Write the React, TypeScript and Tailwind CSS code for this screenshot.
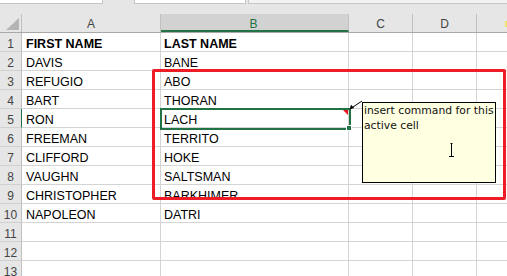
import React from "react";

const rows: [string, string][] = [
  ["FIRST NAME", "LAST NAME"],
  ["DAVIS", "BANE"],
  ["REFUGIO", "ABO"],
  ["BART", "THORAN"],
  ["RON", "LACH"],
  ["FREEMAN", "TERRITO"],
  ["CLIFFORD", "HOKE"],
  ["VAUGHN", "SALTSMAN"],
  ["CHRISTOPHER", "BARKHIMER"],
  ["NAPOLEON", "DATRI"],
  ["", ""],
  ["", ""],
  ["", ""],
];

export default function App() {
  return (
    <div className="relative w-[507px] h-[276px] overflow-hidden bg-white font-['Liberation_Sans',Arial,sans-serif] text-black">
      {/* top toolbar strip */}
      <div className="flex h-[14px] items-start bg-[#e6e6e6]">
        <div className="w-[103px] h-[4px] bg-white border-b border-r border-[#c6c6c6]" />
        <div className="ml-[31px] w-[112px] h-[4px] bg-white border-b border-l border-r border-[#c6c6c6]" />
        <div className="ml-[2px] flex-1 h-[4px] bg-[#f3f3f3] border-b border-l border-[#c6c6c6]" />
      </div>

      {/* column header */}
      <div className="flex h-[19px] bg-[#e6e6e6] border-b border-[#a8a8a8] text-[12px] leading-[14px] text-[#444]">
        <div className="relative w-[22px] shrink-0 border-r border-[#c0c0c0]">
          <svg className="absolute left-0 top-0" width="22" height="19" viewBox="0 0 22 19">
            <polygon points="6,16 19,16 19,4" fill="#b4b4b4" />
          </svg>
        </div>
        <div className="w-[139px] shrink-0 border-r border-[#c0c0c0] flex items-center justify-center pt-[2px]">A</div>
        <div className="w-[188px] shrink-0 bg-[#d2d2d2] border-r border-[#c0c0c0] border-b-2 border-b-[#217346] flex items-center justify-center pt-[3px] text-[#217346]">
          <span className="-ml-[2px]">B</span>
        </div>
        <div className="w-[64px] shrink-0 border-r border-[#c0c0c0] flex items-center justify-center pt-[2px]">C</div>
        <div className="w-[64px] shrink-0 border-r border-[#c0c0c0] flex items-center justify-center pt-[2px]">D</div>
        <div className="flex-1 flex items-center justify-end pt-[2px]">
          <div className="w-[2px] h-[6px] bg-[#f2e26a]" />
        </div>
      </div>

      {/* rows */}
      {rows.map(([a, b], i) => (
        <div key={i} className="flex h-[19px] text-[12.5px] leading-[14px]">
          <div
            className={
              i === 4
                ? "w-[22px] shrink-0 bg-[#e6e6e6] border-r border-r-[#217346] border-b border-b-[#d0d0d0] flex items-end justify-center text-[12px] text-[#444]"
                : "w-[22px] shrink-0 bg-[#e6e6e6] border-r border-r-[#c0c0c0] border-b border-b-[#d0d0d0] flex items-end justify-center text-[12px] text-[#444]"
            }
          >
            {i + 1}
          </div>
          <div
            className={
              i === 0
                ? "w-[139px] shrink-0 border-r border-b border-[#d4d4d4] flex items-end pl-[4px] font-bold"
                : "w-[139px] shrink-0 border-r border-b border-[#d4d4d4] flex items-end pl-[4px]"
            }
          >
            {a}
          </div>
          <div
            className={
              i === 0
                ? "w-[188px] shrink-0 border-r border-b border-[#d4d4d4] flex items-end pl-[3px] font-bold"
                : "w-[188px] shrink-0 border-r border-b border-[#d4d4d4] flex items-end pl-[3px]"
            }
          >
            {b}
          </div>
          <div className="w-[64px] shrink-0 border-r border-b border-[#d4d4d4]" />
          <div className="w-[64px] shrink-0 border-r border-b border-[#d4d4d4]" />
          <div className="flex-1 border-b border-[#d4d4d4]" />
        </div>
      ))}

      {/* red highlight rectangle */}
      <div className="absolute left-[152px] top-[69px] w-[354px] h-[131px] border-[3px] border-[#ee1c25] rounded-[2px]" />

      {/* active cell */}
      <div className="absolute left-[160px] top-[108px] w-[191px] h-[22px] border-2 border-[#217346]" />
      <div className="absolute left-[346px] top-[125px] w-[6px] h-[6px] bg-[#217346] border border-white" />
      <svg className="absolute left-[343px] top-[110px]" width="6" height="6" viewBox="0 0 6 6">
        <polygon points="0,0 5,0 5,5" fill="#e8101a" />
      </svg>

      {/* comment arrow */}
      <svg className="absolute left-[346px] top-[98px]" width="20" height="16" viewBox="0 0 20 16">
        <line x1="4" y1="11" x2="16" y2="3" stroke="#000" strokeWidth="1" />
        <polygon points="3.5,11.5 5,6.8 8.2,10" fill="#000" />
      </svg>

      {/* comment box */}
      <div className="absolute left-[362px] top-[102px] w-[134px] h-[81px] bg-[#ffffe1] border border-black pl-[1px] font-['DejaVu_Sans',Verdana,sans-serif] text-[10.8px] leading-[15px] text-[#111]">
        insert command for this active cell
      </div>

      {/* I-beam cursor */}
      <svg className="absolute left-[448px] top-[142px]" width="8" height="16" viewBox="0 0 8 16">
        <line x1="3.5" y1="1" x2="3.5" y2="14" stroke="#000" strokeWidth="1" />
        <line x1="1" y1="14.5" x2="6" y2="14.5" stroke="#000" strokeWidth="1" />
        <line x1="2.5" y1="1.5" x2="4.5" y2="1.5" stroke="#000" strokeWidth="1" />
      </svg>
    </div>
  );
}
